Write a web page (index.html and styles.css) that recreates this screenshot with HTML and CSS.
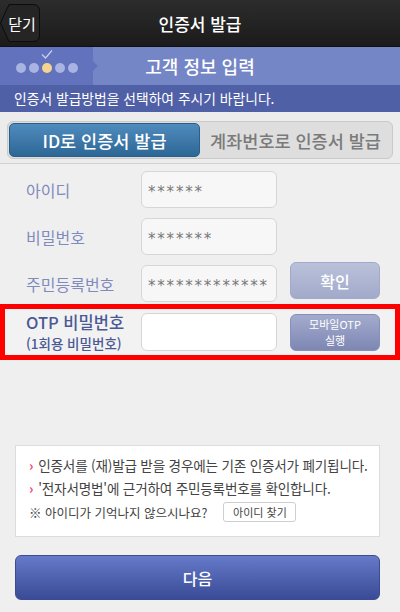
FILE: index.html
```html
<!DOCTYPE html>
<html lang="ko">
<head>
<meta charset="utf-8">
<link rel="stylesheet" href="styles.css">
</head>
<body>
<div class="page">
  <header class="topbar">
    <div class="close">
      <svg class="close-bg" width="40" height="38" viewBox="0 0 40 38">
        <path d="M9 0.5 H33 Q39.5 0.5 39.5 7 V31 Q39.5 37.5 33 37.5 H9 L0.5 19 Z" fill="#252525" stroke="#0c0c0c" stroke-width="1"/>
      </svg>
      <span class="close-text">닫기</span>
    </div>
    <h1 class="title">인증서 발급</h1>
    <div class="spacer"></div>
  </header>

  <div class="progress">
    <div class="steps">
      <svg class="check" width="12" height="9" viewBox="0 0 12 9"><path d="M1 4.5 L4.5 8 L11 0.5" fill="none" stroke="#c8cff0" stroke-width="1.2"/></svg>
      <span class="dot"></span><span class="dot"></span><span class="dot on"></span><span class="dot"></span><span class="dot"></span>
      <span class="notch"></span>
    </div>
    <div class="step-title">고객 정보 입력</div>
  </div>

  <div class="infobar">인증서 발급방법을 선택하여 주시기 바랍니다.</div>

  <div class="tabs-wrap">
    <div class="tabs">
      <div class="tab active">ID로 인증서 발급</div>
      <div class="tab">계좌번호로 인증서 발급</div>
    </div>
  </div>

  <div class="form">
    <div class="row">
      <label class="label">아이디</label>
      <div class="input">******</div>
    </div>
    <div class="row">
      <label class="label">비밀번호</label>
      <div class="input">*******</div>
    </div>
    <div class="row">
      <label class="label">주민등록번호</label>
      <div class="input">*************</div>
      <button class="btn-confirm">확인</button>
    </div>
    <div class="otp">
      <div class="otp-label">
        <span class="otp-main">OTP 비밀번호</span>
        <span class="otp-sub">(1회용 비밀번호)</span>
      </div>
      <div class="input blank"></div>
      <button class="btn-otp">모바일OTP<br>실행</button>
    </div>
  </div>

  <div class="notice">
    <p class="note"><span class="arrow">›</span>인증서를 (재)발급 받을 경우에는 기존 인증서가 폐기됩니다.</p>
    <p class="note"><span class="arrow">›</span>'전자서명법'에 근거하여 주민등록번호를 확인합니다.</p>
    <div class="find">
      <span>※ 아이디가 기억나지 않으시나요?</span>
      <button class="btn-find">아이디 찾기</button>
    </div>
  </div>

  <button class="btn-next">다음</button>
</div>
</body>
</html>
```

FILE: styles.css
```css
* { box-sizing: border-box; }
html, body { margin: 0; padding: 0; }
body {
  width: 400px;
  height: 612px;
  overflow: hidden;
  background: #efefef;
  font-family: "Noto Sans CJK KR", "Noto Sans", sans-serif;
}
.page { display: flex; flex-direction: column; height: 612px; }

.topbar {
  height: 47px;
  display: grid;
  grid-template-columns: 40px 1fr 40px;
  align-items: center;
  background: linear-gradient(#2c2c2c, #1b1b1b);
  border-bottom: 1px solid #111;
}
.close {
  position: relative;
  height: 38px;
  width: 40px;
  display: flex;
  align-items: center;
  justify-content: center;
}
.close-bg { position: absolute; left: 0; top: 0; }
.close-text {
  position: relative;
  color: #fff;
  font-size: 15px;
  padding-left: 4px;
}
.title {
  margin: 0;
  text-align: center;
  color: #fff;
  font-size: 17px;
  font-weight: 500;
}

.progress {
  height: 38px;
  display: grid;
  grid-template-columns: 93px 1fr 93px;
  align-items: center;
  background: #7586c7;
}
.steps {
  position: relative;
  height: 38px;
  background: #6372bc;
  display: flex;
  align-items: center;
  gap: 3px;
  padding: 4px 0 0 16px;
}
.dot {
  width: 10px;
  height: 10px;
  border-radius: 50%;
  background: #a9b4e3;
}
.dot.on { background: #f6d48f; }
.check { position: absolute; left: 41px; top: 3px; }
.notch {
  position: absolute;
  right: -5px;
  top: 14px;
  width: 0; height: 0;
  border-top: 5px solid transparent;
  border-bottom: 5px solid transparent;
  border-left: 5px solid #6372bc;
}
.step-title {
  text-align: center;
  color: #fff;
  font-size: 18px;
  font-weight: 500;
  margin-left: -93px;
  padding-left: 93px;
}

.infobar {
  height: 27px;
  background: #5060a7;
  color: #fff;
  font-size: 13.8px;
  line-height: 27px;
  padding-left: 14px;
}

.tabs-wrap {
  height: 52px;
  background: #ececec;
  border-bottom: 1px solid #d2d2d2;
  padding: 9px 7px 0 7px;
}
.tabs {
  height: 38px;
  border: 1px solid #c9c9c9;
  border-radius: 6px;
  background: #dedede;
  display: grid;
  grid-template-columns: 191px 1fr;
  padding: 1px;
}
.tab {
  display: flex;
  align-items: center;
  justify-content: center;
  font-size: 17.5px;
  color: #7a7a7a;
  font-weight: 500;
  white-space: nowrap;
}
.tab.active {
  background: linear-gradient(#4f8bbd, #2d6796);
  border-radius: 5px;
  color: #fff;
  border: 1px solid #2b5f8a;
}

.form {
  padding: 7px 0 0 0;
  display: flex;
  flex-direction: column;
  gap: 10px;
}
.row {
  display: flex;
  align-items: center;
  height: 37px;
}
.label {
  width: 141px;
  padding-left: 26px;
  font-size: 16px;
  color: #7f8bbd;
}
.input {
  width: 136px;
  height: 37px;
  border: 1px solid #d6d6d6;
  border-radius: 6px;
  background: #f7f7f7;
  color: #777;
  font-size: 15px;
  font-family: "DejaVu Sans", sans-serif;
  letter-spacing: 1.8px;
  line-height: 37px;
  padding: 2px 0 0 6px;
  overflow: hidden;
  white-space: nowrap;
}
.input.blank { background: #fff; height: 38px; }
.btn-confirm {
  margin-left: 13px;
  margin-top: -6px;
  width: 90px;
  height: 37px;
  border: 1px solid #a2aacb;
  border-radius: 6px;
  background: linear-gradient(#bac1da, #a2aaca);
  color: #fff;
  font-family: "Noto Sans CJK KR", sans-serif;
  font-size: 16px;
  font-weight: 500;
}

.otp {
  height: 56px;
  border: 5px solid #ff0000;
  background: #f2f2f2;
  display: flex;
  align-items: center;
  margin-top: -8px;
}
.otp-label {
  width: 136px;
  padding-left: 21px;
  display: flex;
  flex-direction: column;
  color: #4a5995;
}
.otp-main { font-size: 16.5px; line-height: 24px; margin-top: -3px; font-weight: 500; white-space: nowrap; }
.otp-sub { font-size: 13.5px; line-height: 20px; margin-top: -1px; margin-bottom: -2px; font-weight: 500; white-space: nowrap; }
.btn-otp {
  margin-left: 13px;
  width: 90px;
  height: 37px;
  border: 1px solid #8790b8;
  border-radius: 6px;
  background: linear-gradient(#a3abcd, #7e87b3);
  color: #fff;
  font-family: "Noto Sans CJK KR", sans-serif;
  font-size: 11px;
  line-height: 16px;
  padding: 0;
}

.notice {
  margin: 85px 0 0 15px;
  width: 365px;
  height: 92px;
  background: #fff;
  border: 1px solid #dcdcdc;
  padding: 10px 0 0 13px;
}
.note {
  margin: 0 0 5px 0;
  font-size: 13.6px;
  line-height: 18px;
  color: #444;
  letter-spacing: -0.2px;
  white-space: nowrap;
}
.arrow {
  color: #e8457a;
  margin-right: 5px;
  font-weight: 700;
}
.find {
  display: flex;
  align-items: center;
  font-size: 12.5px;
  color: #444;
}
.btn-find {
  margin-left: 16px;
  width: 73px;
  height: 20px;
  border: 1px solid #cfcfcf;
  border-radius: 3px;
  background: #fff;
  font-family: "Noto Sans CJK KR", sans-serif;
  font-size: 11px;
  color: #444;
  padding: 0;
}

.btn-next {
  margin: 18px 0 0 15px;
  width: 365px;
  height: 45px;
  border: 1px solid #3c4c92;
  border-radius: 6px;
  background: linear-gradient(#657ac9, #3a4b96);
  color: #fff;
  font-family: "Noto Sans CJK KR", sans-serif;
  font-size: 16px;
  font-weight: 500;
}
```
